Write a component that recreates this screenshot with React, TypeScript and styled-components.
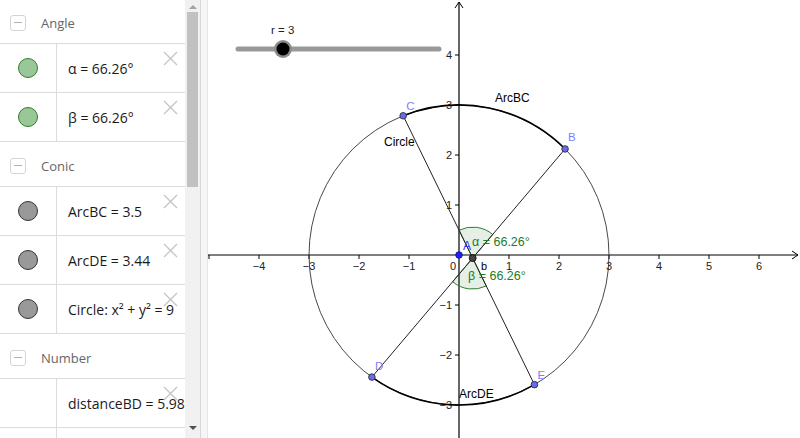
import styled, { createGlobalStyle } from "styled-components";

const GlobalStyle = createGlobalStyle`
  html, body {
    margin: 0;
    padding: 0;
    overflow: hidden;
    background: #ffffff;
  }
`;

const Frame = styled.div`
  width: 800px;
  height: 438px;
  display: flex;
  overflow: hidden;
  font-family: "Open Sans", "Liberation Sans", sans-serif;
`;

const AlgebraPanel = styled.div`
  width: 185px;
  height: 100%;
  overflow: hidden;
  background: #ffffff;
`;

const List = styled.div`
  margin-top: -1px;
  display: flex;
  flex-direction: column;
`;

const GroupHeader = styled.div`
  box-sizing: border-box;
  height: 45px;
  padding: 3px 0 0 10px;
  border-bottom: 1px solid #dcdcdc;
  display: flex;
  align-items: center;
  gap: 15px;
  color: #666666;
  font-size: 13px;
`;

const Collapse = styled.div`
  width: 14px;
  height: 14px;
  border: 1px solid #d4d4d4;
  border-radius: 3px;
  display: flex;
  align-items: center;
  justify-content: center;
  &::after {
    content: "";
    width: 8px;
    height: 1px;
    background: #b0b0b0;
  }
`;

const ItemRow = styled.div`
  box-sizing: border-box;
  height: 49px;
  border-bottom: 1px solid #dcdcdc;
  display: flex;
  position: relative;
`;

const IconCell = styled.div`
  width: 56px;
  border-right: 1px solid #dcdcdc;
  display: flex;
  align-items: center;
  justify-content: center;
`;

const Marble = styled.div<{ $fill: string; $edge: string }>`
  width: 18px;
  height: 18px;
  border-radius: 50%;
  background: ${(p) => p.$fill};
  border: 1px solid ${(p) => p.$edge};
`;

const Formula = styled.div`
  flex: 1;
  display: flex;
  align-items: center;
  padding-left: 11px;
  font-size: 14px;
  color: #1a1a1a;
  white-space: nowrap;
  overflow: hidden;
`;

const CloseMark = styled.svg`
  position: absolute;
  right: 7px;
  top: 7px;
`;

const ScrollTrack = styled.div`
  width: 15px;
  height: 100%;
  background: #f1f1f1;
  display: flex;
  flex-direction: column;
  align-items: center;
`;

const ScrollArrow = styled.div<{ $down?: boolean }>`
  width: 0;
  height: 0;
  margin: 5px 0 3px;
  border-left: 4px solid transparent;
  border-right: 4px solid transparent;
  ${(p) =>
    p.$down
      ? "border-top: 4px solid #505050; margin-top: auto; margin-bottom: 8px;"
      : "border-bottom: 4px solid #a3a3a3;"}
`;

const ScrollThumb = styled.div`
  width: 11px;
  height: 175px;
  background: #c1c1c1;
`;

const Splitter = styled.div`
  width: 6px;
  height: 100%;
  background: #f6f6f6;
  border-left: 1px solid #d9d9d9;
  border-right: 1px solid #e6e6e6;
`;

const Graphics = styled.div`
  flex: 1;
  height: 100%;
  background: #ffffff;
`;

type Row =
  | { kind: "head"; label: string }
  | { kind: "item"; text: string; fill?: string; edge?: string };

const rows: Row[] = [
  { kind: "head", label: "Angle" },
  { kind: "item", text: "α = 66.26°", fill: "#99c797", edge: "#2f7d2f" },
  { kind: "item", text: "β = 66.26°", fill: "#99c797", edge: "#2f7d2f" },
  { kind: "head", label: "Conic" },
  { kind: "item", text: "ArcBC = 3.5", fill: "#999999", edge: "#333333" },
  { kind: "item", text: "ArcDE = 3.44", fill: "#999999", edge: "#333333" },
  { kind: "item", text: "Circle: x² + y² = 9", fill: "#999999", edge: "#333333" },
  { kind: "head", label: "Number" },
  { kind: "item", text: "distanceBD = 5.98" },
  { kind: "item", text: "" },
];

// canvas coordinates
const OX = 251;
const OY = 255;
const U = 50;
const X = (x: number) => OX + x * U;
const Y = (y: number) => OY - y * U;
const onCircle = (deg: number) => {
  const a = (deg * Math.PI) / 180;
  return { x: 3 * Math.cos(a), y: 3 * Math.sin(a) };
};

const B = onCircle(45);
const C = onCircle(111.85);
const D = onCircle(234.5);
const E = onCircle(300.2);

const intersect = (
  p1: { x: number; y: number },
  p2: { x: number; y: number },
  p3: { x: number; y: number },
  p4: { x: number; y: number }
) => {
  const d = (p1.x - p2.x) * (p3.y - p4.y) - (p1.y - p2.y) * (p3.x - p4.x);
  const a = p1.x * p2.y - p1.y * p2.x;
  const b = p3.x * p4.y - p3.y * p4.x;
  return {
    x: (a * (p3.x - p4.x) - (p1.x - p2.x) * b) / d,
    y: (a * (p3.y - p4.y) - (p1.y - p2.y) * b) / d,
  };
};

const P = intersect(C, E, D, B);
const dirDeg = (q: { x: number; y: number }) =>
  (Math.atan2(q.y - P.y, q.x - P.x) * 180) / Math.PI;

const sector = (a1: number, a2: number, r: number) => {
  const px = X(P.x);
  const py = Y(P.y);
  const r1 = (a1 * Math.PI) / 180;
  const r2 = (a2 * Math.PI) / 180;
  return `M${px} ${py} L${px + r * Math.cos(r1)} ${py - r * Math.sin(r1)} A${r} ${r} 0 0 0 ${
    px + r * Math.cos(r2)
  } ${py - r * Math.sin(r2)} Z`;
};

const arc = (p: { x: number; y: number }, q: { x: number; y: number }) =>
  `M${X(p.x)} ${Y(p.y)} A150 150 0 0 0 ${X(q.x)} ${Y(q.y)}`;

const xTicks = [-5, -4, -3, -2, -1, 1, 2, 3, 4, 5, 6];
const yTicks = [4, 3, 2, 1, -1, -2, -3];
const minus = (n: number) => (n < 0 ? `\u2212${-n}` : `${n}`);

function Canvas() {
  const dBeta = dirDeg(D);
  const eBeta = dirDeg(E) + 360;
  return (
    <svg width="592" height="438" viewBox="0 0 592 438">
      <g fontFamily="'Liberation Sans', Arial, sans-serif">
        {/* axes */}
        <line x1="0" y1={OY} x2="590" y2={OY} stroke="#000" strokeWidth="1.2" />
        <path d={`M584 ${OY - 4} L590 ${OY} L584 ${OY + 4}`} stroke="#000" fill="none" />
        <line x1={OX} y1="2" x2={OX} y2="438" stroke="#000" strokeWidth="1.2" />
        <path d={`M${OX - 4} 8 L${OX} 2 L${OX + 4} 8`} stroke="#000" fill="none" />
        {xTicks.map((t) => (
          <g key={`x${t}`}>
            <line x1={X(t)} y1={OY} x2={X(t)} y2={OY + 4} stroke="#000" />
            {t !== -5 && (
              <text x={X(t)} y={OY + 15} fontSize="11" textAnchor="middle" fill="#222">
                {minus(t)}
              </text>
            )}
          </g>
        ))}
        {yTicks.map((t) => (
          <g key={`y${t}`}>
            <line x1={OX - 4} y1={Y(t)} x2={OX} y2={Y(t)} stroke="#000" />
            <text x={OX - 7} y={Y(t) + 4} fontSize="11" textAnchor="end" fill="#222">
              {minus(t)}
            </text>
          </g>
        ))}
        <text x={OX - 9} y={OY + 15} fontSize="11" fill="#222">
          0
        </text>

        {/* slider r */}
        <text x="63" y="34" fontSize="11.5" fill="#222">
          r = 3
        </text>
        <line x1="30" y1="49" x2="231" y2="49" stroke="#999" strokeWidth="5" strokeLinecap="round" />
        <circle cx="75" cy="49" r="9" fill="#8c8c8c" />
        <circle cx="75" cy="49" r="6.5" fill="#000" />

        {/* circle and arcs */}
        <circle cx={OX} cy={OY} r="150" fill="none" stroke="#333" strokeWidth="0.9" />
        <path d={arc(B, C)} fill="none" stroke="#000" strokeWidth="1.6" />
        <path d={arc(D, E)} fill="none" stroke="#000" strokeWidth="1.6" />

        {/* angles */}
        <path
          d={sector(dirDeg(B), dirDeg(C), 31)}
          fill="rgba(0,100,0,0.1)"
          stroke="#2e7d32"
          strokeWidth="1"
        />
        <path d={sector(dBeta, eBeta, 31)} fill="rgba(0,100,0,0.1)" stroke="#2e7d32" strokeWidth="1" />

        {/* segments */}
        <line x1={X(C.x)} y1={Y(C.y)} x2={X(E.x)} y2={Y(E.y)} stroke="#222" strokeWidth="1" />
        <line x1={X(D.x)} y1={Y(D.y)} x2={X(B.x)} y2={Y(B.y)} stroke="#222" strokeWidth="1" />

        {/* labels */}
        <text x="287" y="102" fontSize="12" fill="#000">
          ArcBC
        </text>
        <text x="176" y="146" fontSize="12" fill="#000">
          Circle
        </text>
        <text x="251" y="398" fontSize="12" fill="#000">
          ArcDE
        </text>
        <text x="264" y="246" fontSize="12.5" fill="#1e7b1e">
          α = 66.26°
        </text>
        <text x="260" y="280" fontSize="12.5" fill="#1e7b1e">
          β = 66.26°
        </text>
        <text x="273" y="270" fontSize="11" fill="#000">
          b
        </text>

        {/* points */}
        {[
          { p: C, l: "C", dx: 3, dy: -6 },
          { p: B, l: "B", dx: 3, dy: -8 },
          { p: D, l: "D", dx: 3, dy: -7 },
          { p: E, l: "E", dx: 3, dy: -6 },
        ].map(({ p, l, dx, dy }) => (
          <g key={l}>
            <circle cx={X(p.x)} cy={Y(p.y)} r="3.3" fill="#6a6aee" stroke="#222" strokeWidth="0.8" />
            <text x={X(p.x) + dx} y={Y(p.y) + dy} fontSize="11.5" fill="#7d7dff">
              {l}
            </text>
          </g>
        ))}
        <circle cx={OX} cy={OY} r="3.3" fill="#2020ff" stroke="#101080" strokeWidth="0.8" />
        <text x={OX + 4} y={OY - 5} fontSize="12" fill="#3030ff">
          A
        </text>
        <circle cx={X(P.x)} cy={Y(P.y)} r="3.5" fill="#444" stroke="#000" strokeWidth="0.8" />
      </g>
    </svg>
  );
}

export default function App() {
  return (
    <>
      <GlobalStyle />
      <Frame>
        <AlgebraPanel>
          <List>
            {rows.map((r, i) =>
              r.kind === "head" ? (
                <GroupHeader key={i}>
                  <Collapse />
                  {r.label}
                </GroupHeader>
              ) : (
                <ItemRow key={i}>
                  <IconCell>{r.fill && <Marble $fill={r.fill} $edge={r.edge ?? "#333"} />}</IconCell>
                  <Formula>{r.text}</Formula>
                  {r.text && (
                    <CloseMark width="15" height="15" viewBox="0 0 15 15">
                      <path d="M1 1 L14 14 M14 1 L1 14" stroke="#c4c4c4" strokeWidth="1.3" />
                    </CloseMark>
                  )}
                </ItemRow>
              )
            )}
          </List>
        </AlgebraPanel>
        <ScrollTrack>
          <ScrollArrow />
          <ScrollThumb />
          <ScrollArrow $down />
        </ScrollTrack>
        <Splitter />
        <Graphics>
          <Canvas />
        </Graphics>
      </Frame>
    </>
  );
}
